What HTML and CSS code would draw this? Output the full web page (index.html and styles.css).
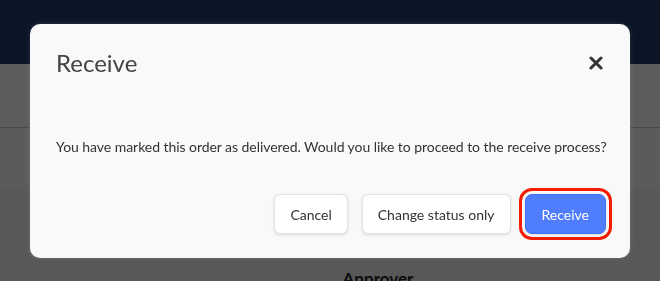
FILE: index.html
```html
<!DOCTYPE html>
<html lang="en">
<head>
<meta charset="utf-8">
<title>Receive</title>
<link rel="stylesheet" href="styles.css">
</head>
<body>
<div class="page">
  <header class="topbar"></header>
  <div class="subbar"></div>
  <div class="toolbar"></div>
  <main class="content">
    <div class="col-label">Approver</div>
  </main>
</div>
<div class="overlay">
  <div class="modal" role="dialog" aria-labelledby="modal-title">
    <div class="modal-header">
      <h2 id="modal-title" class="modal-title">Receive</h2>
      <button class="close" aria-label="Close">
        <svg width="14" height="14" viewBox="0 0 14 14"><path d="M2 2 L12 12 M12 2 L2 12" stroke="#333" stroke-width="3" stroke-linecap="round"/></svg>
      </button>
    </div>
    <p class="modal-body">You have marked this order as delivered. Would you like to proceed to the receive process?</p>
    <div class="modal-actions">
      <button class="btn">Cancel</button>
      <button class="btn">Change status only</button>
      <button class="btn btn-primary">Receive</button>
    </div>
  </div>
</div>
</body>
</html>
```
FILE: styles.css
```css
* { box-sizing: border-box; }
html, body { margin: 0; padding: 0; }
body {
  width: 660px;
  height: 281px;
  overflow: hidden;
  font-family: "Lato", "Liberation Sans", sans-serif;
  background: #f2f2f2;
}
.page { display: flex; flex-direction: column; height: 281px; overflow: hidden; }
.topbar { flex: none; height: 64px; background: #1f3a6a; }
.subbar { flex: none; height: 64px; background: #ffffff; border-bottom: 1px solid #cfcfcf; }
.toolbar { flex: none; height: 62px; background: #fdfdfd; box-shadow: 0 1px 2px rgba(0,0,0,0.08); }
.content { flex: none; height: 200px; background: #f4f4f4; display: flex; justify-content: center; padding-top: 79px; }
.col-label { font-weight: 700; font-size: 17px; line-height: 20px; color: #222; margin-left: 96px; }

.overlay {
  position: fixed;
  inset: 0;
  background: rgba(0,0,0,0.64);
  display: flex;
  justify-content: center;
  align-items: flex-start;
  padding-top: 24px;
}
.modal {
  width: 600px;
  background: #f9f9f9;
  border-radius: 10px;
  padding: 24px 24px 24px 26px;
  box-shadow: 0 0 4px rgba(255,255,255,0.15);
}
.modal-header { display: flex; align-items: center; justify-content: space-between; height: 30px; }
.modal-title { margin: 0; font-weight: 400; font-size: 24px; line-height: 30px; color: #444; }
.close {
  border: 0; background: none; padding: 0; margin-right: 3px;
  width: 14px; height: 14px; display: flex; cursor: pointer;
}
.modal-body {
  margin: 59px 0 0;
  font-size: 14px;
  line-height: 20px;
  color: #333;
  white-space: nowrap;
  letter-spacing: -0.05px;
}
.modal-actions {
  display: flex;
  justify-content: flex-end;
  gap: 14px;
  margin-top: 37px;
}
.btn {
  height: 40px;
  padding: 0 15px;
  font-family: inherit;
  font-size: 14px;
  color: #333;
  background: #fff;
  border: 1px solid #e2e2e2;
  border-radius: 6px;
  box-shadow: 0 1px 3px rgba(0,0,0,0.12);
}
.btn-primary {
  padding: 0 16px;
  background: #4f7dfd;
  border-color: #4370ee;
  color: #fff;
  outline: 3px solid #f21d00;
  outline-offset: 3px;
  border-radius: 7px;
}
```
